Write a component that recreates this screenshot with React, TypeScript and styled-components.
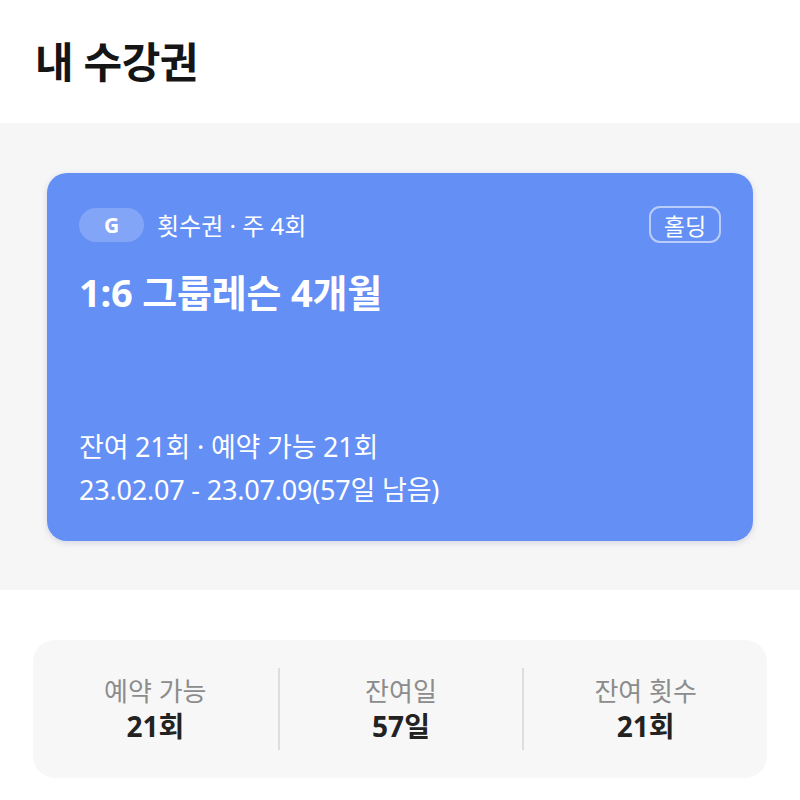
import styled, { createGlobalStyle } from "styled-components";

const GlobalStyle = createGlobalStyle`
  body {
    margin: 0;
    background: #ffffff;
    font-family: "Noto Sans", "Noto Sans CJK KR", sans-serif;
  }
`;

const ticket = {
  badge: "G",
  kind: "횟수권 · 주 4회",
  name: "1:6 그룹레슨 4개월",
  usage: "잔여 21회 · 예약 가능 21회",
  period: "23.02.07 - 23.07.09(57일 남음)",
};

const stats = [
  { label: "예약 가능", value: "21회" },
  { label: "잔여일", value: "57일" },
  { label: "잔여 횟수", value: "21회" },
];

const Page = styled.div`
  width: 800px;
  background: #ffffff;
`;

const Header = styled.header`
  height: 123px;
  display: flex;
  align-items: center;
  padding-left: 35px;
  box-sizing: border-box;
`;

const Title = styled.h1`
  margin: 0 0 4px;
  font-size: 42px;
  font-weight: 700;
  color: #151515;
  letter-spacing: -0.5px;
`;

const TicketSection = styled.section`
  background: #f6f6f6;
  padding: 50px 47px 49px;
`;

const Card = styled.div`
  height: 368px;
  box-sizing: border-box;
  background: #648ff5;
  border-radius: 20px;
  box-shadow: 0 2px 6px rgba(60, 80, 140, 0.18);
  padding: 33px 32px 33px;
  display: flex;
  flex-direction: column;
  color: #ffffff;
`;

const TopRow = styled.div`
  display: flex;
  align-items: center;
  height: 37px;
`;

const Badge = styled.span`
  width: 65px;
  height: 34px;
  border-radius: 17px;
  background: rgba(255, 255, 255, 0.2);
  display: flex;
  align-items: center;
  justify-content: center;
  font-size: 21px;
  font-weight: 700;
`;

const Kind = styled.span`
  margin-left: 13px;
  font-size: 24px;
  font-weight: 400;
`;

const HoldButton = styled.button`
  margin-left: auto;
  height: 37px;
  width: 72px;
  border: 2px solid rgba(255, 255, 255, 0.55);
  border-radius: 11px;
  background: transparent;
  color: #ffffff;
  font-family: inherit;
  font-size: 23px;
  padding: 0;
  display: flex;
  align-items: center;
  justify-content: center;
`;

const TicketName = styled.h2`
  margin: 27px 0 0;
  font-size: 38px;
  line-height: 44px;
  font-weight: 700;
  letter-spacing: -0.2px;
`;

const Details = styled.div`
  margin-top: auto;
  display: flex;
  flex-direction: column;
  gap: 7px;
`;

const DetailLine = styled.div`
  font-size: 27px;
  line-height: 36px;
  font-weight: 400;
  letter-spacing: -0.2px;
`;

const StatsSection = styled.section`
  padding: 50px 33px 22px;
`;

const StatsCard = styled.div`
  height: 138px;
  border-radius: 22px;
  background: #f7f7f7;
  display: grid;
  grid-template-columns: repeat(3, 1fr);
  align-items: center;
`;

const Stat = styled.div<{ $divider: boolean }>`
  height: 82px;
  display: flex;
  flex-direction: column;
  align-items: center;
  justify-content: center;
  border-left: ${(p) => (p.$divider ? "2px solid #dedede" : "none")};
`;

const StatLabel = styled.span`
  font-size: 26px;
  line-height: 34px;
  color: #8c8c8c;
`;

const StatValue = styled.span`
  font-size: 28px;
  line-height: 36px;
  font-weight: 700;
  color: #222222;
`;

export default function App() {
  return (
    <Page>
      <GlobalStyle />
      <Header>
        <Title>내 수강권</Title>
      </Header>
      <TicketSection>
        <Card>
          <TopRow>
            <Badge>{ticket.badge}</Badge>
            <Kind>{ticket.kind}</Kind>
            <HoldButton>홀딩</HoldButton>
          </TopRow>
          <TicketName>{ticket.name}</TicketName>
          <Details>
            <DetailLine>{ticket.usage}</DetailLine>
            <DetailLine>{ticket.period}</DetailLine>
          </Details>
        </Card>
      </TicketSection>
      <StatsSection>
        <StatsCard>
          {stats.map((s, i) => (
            <Stat key={s.label} $divider={i > 0}>
              <StatLabel>{s.label}</StatLabel>
              <StatValue>{s.value}</StatValue>
            </Stat>
          ))}
        </StatsCard>
      </StatsSection>
    </Page>
  );
}
